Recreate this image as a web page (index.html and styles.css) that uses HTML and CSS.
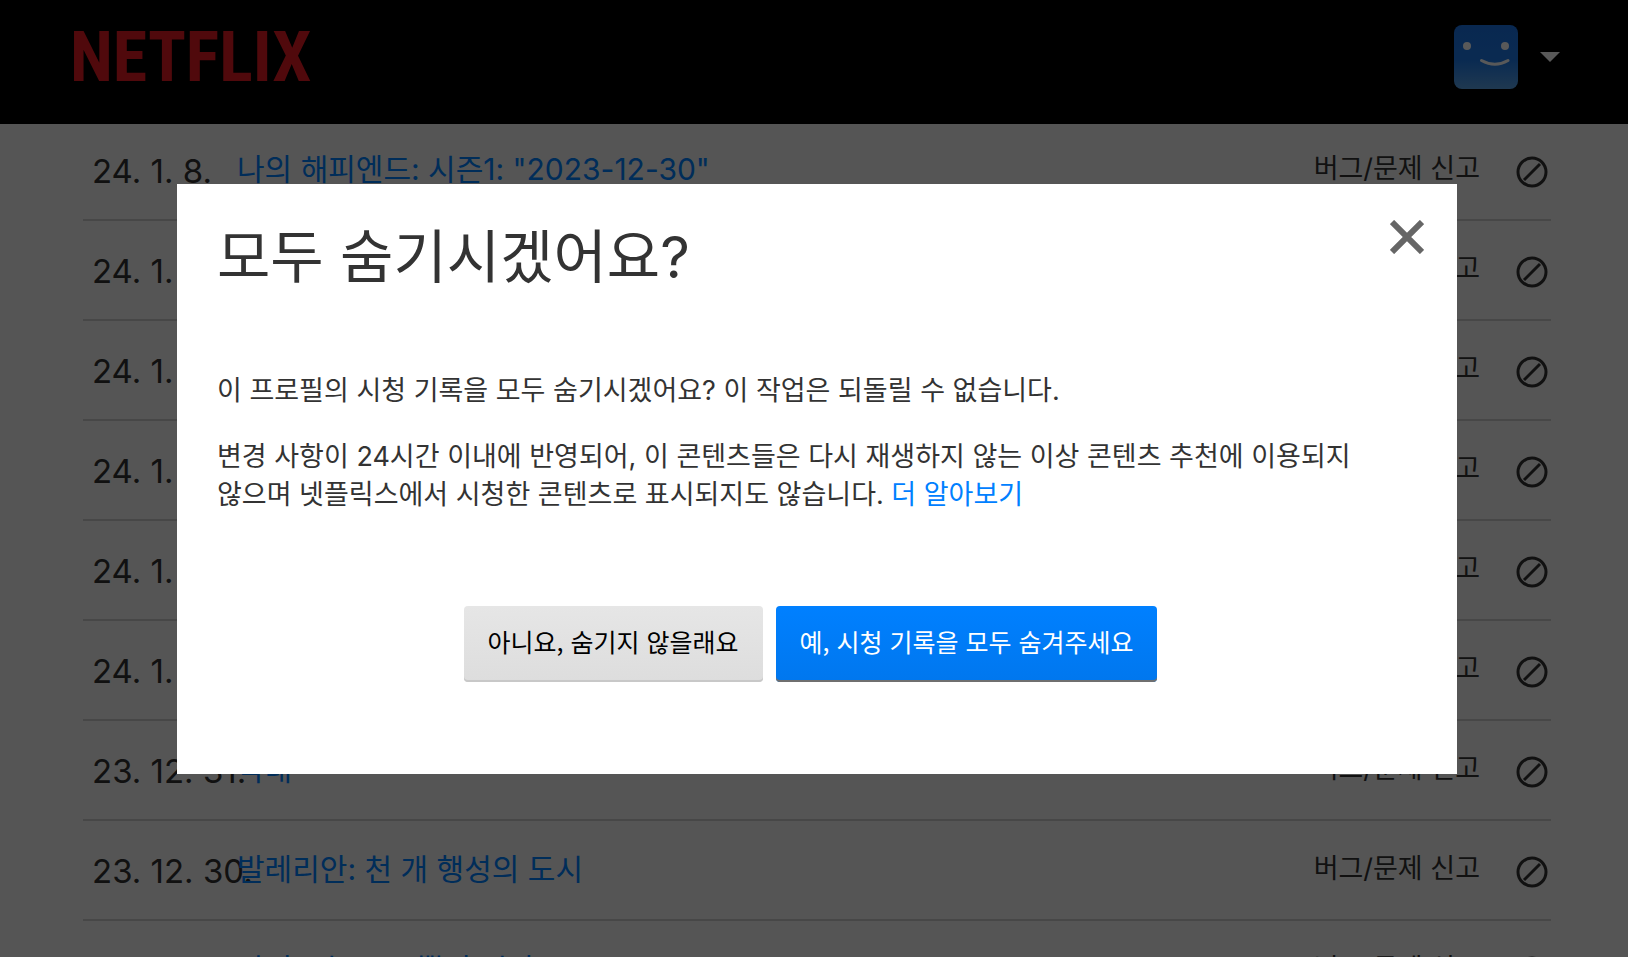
FILE: index.html
```html
<!DOCTYPE html>
<html lang="ko">
<head>
    <meta charset="UTF-8">
    <meta name="viewport" content="width=device-width, initial-scale=1.0">
    <title>시청 기록 - 넷플릭스</title>
    <link rel="stylesheet" href="styles.css">
</head>
<body>
    <header class="header">
        <a href="#" class="logo">NETFLIX</a>
        <button type="button" class="profile" aria-label="프로필">
            <svg class="avatar" viewBox="0 0 64 64">
                <defs>
                    <linearGradient id="avatarFill" x1="0" y1="0" x2="0" y2="1">
                        <stop offset="0" stop-color="#1b73e6"/>
                        <stop offset="0.55" stop-color="#1e7ae8"/>
                        <stop offset="1" stop-color="#5aa2e6"/>
                    </linearGradient>
                </defs>
                <rect width="64" height="64" rx="8" fill="url(#avatarFill)"/>
                <circle cx="13" cy="21" r="4" fill="#fff"/>
                <circle cx="51" cy="21" r="4" fill="#fff"/>
                <path d="M27.500 35.500 Q41 43 54 35.500" fill="none" stroke="#fff" stroke-width="3" stroke-linecap="round"/>
            </svg>
            <span class="arrow"></span>
        </button>
    </header>

    <main class="container">
        <ul class="history" id="history"></ul>
    </main>

    <div class="overlay">
        <div class="modal" role="dialog" aria-modal="true" aria-labelledby="modalTitle">
            <button type="button" class="close" aria-label="닫기">
                <svg viewBox="0 0 34 34">
                    <path d="M2 2 L32 32 M32 2 L2 32" stroke="#666" stroke-width="6"/>
                </svg>
            </button>
            <h1 id="modalTitle">모두 숨기시겠어요?</h1>
            <p>이 프로필의 시청 기록을 모두 숨기시겠어요? 이 작업은 되돌릴 수 없습니다.</p>
            <p>변경 사항이 24시간 이내에 반영되어, 이 콘텐츠들은 다시 재생하지 않는 이상 콘텐츠 추천에 이용되지 않으며 넷플릭스에서 시청한 콘텐츠로 표시되지도 않습니다. <a href="#">더 알아보기</a></p>
            <div class="buttons">
                <button type="button" class="btn btn-gray">아니요, 숨기지 않을래요</button>
                <button type="button" class="btn btn-blue">예, 시청 기록을 모두 숨겨주세요</button>
            </div>
        </div>
    </div>

    <script src="script.js"></script>
</body>
</html>
```

FILE: styles.css
```css
* {
    box-sizing: border-box;
}
body {
    margin: 0;
    height: 100vh;
    overflow: hidden;
    background-color: #f3f3f3;
    color: #333;
    font-family: Inter, 'Noto Sans CJK KR', sans-serif;
}
a {
    color: #0080ff;
    text-decoration: none;
}
button {
    border: none;
    padding: 0;
    background: none;
    font-family: inherit;
    cursor: pointer;
}
.header {
    display: flex;
    justify-content: space-between;
    align-items: center;
    height: 124px;
    padding: 0 68px 10px 70px;
    background-color: #000;
}
.logo {
    color: #e51c23;
    font-family: 'Roboto Condensed', 'Liberation Sans Narrow', Roboto, sans-serif;
    font-size: 70px;
    font-weight: bold;
    line-height: 64px;
}
.profile {
    display: flex;
    align-items: center;
    gap: 22px;
}
.avatar {
    width: 64px;
    height: 64px;
}
.arrow {
    border: 10px solid transparent;
    border-top-color: #fff;
    border-bottom: none;
}
.container {
    padding: 0 77px 0 83px;
}
.history {
    margin: 0;
    padding: 0;
    list-style: none;
}
.history li {
    display: flex;
    align-items: flex-end;
    height: 100px;
    padding: 0 3px 31px 9px;
    border-bottom: 2px solid #ccc;
    line-height: 32px;
}
.history li:first-child {
    height: 97px;
}
.date {
    width: 145px;
    padding-bottom: 1px;
    font-size: 33px;
    white-space: nowrap;
}
.title {
    flex: 1;
    padding-bottom: 3px;
    font-size: 30px;
}
.report {
    margin-right: 36px;
    padding-bottom: 3px;
    color: #333;
    font-size: 27px;
}
.hide {
    width: 32px;
    height: 32px;
}
svg {
    display: block;
}
.overlay {
    position: fixed;
    inset: 0;
    display: flex;
    justify-content: center;
    align-items: flex-start;
    padding: 184px 171px 0 177px;
    background-color: rgba(0, 0, 0, 0.65);
}
.modal {
    position: relative;
    width: 100%;
    padding: 33px 40px 92px;
    background-color: #fff;
}
.modal h1 {
    margin: 0 0 75px;
    font-size: 58px;
    font-weight: normal;
    line-height: 80px;
}
.modal p {
    margin: 0 0 28px;
    font-size: 27px;
    line-height: 38px;
    word-break: keep-all;
}
.close {
    position: absolute;
    top: 36px;
    right: 33px;
    width: 34px;
    height: 34px;
}
.buttons {
    display: flex;
    justify-content: center;
    margin-top: 92px;
}
.btn {
    height: 76px;
    margin-right: 13px;
    padding: 0 24px 6px;
    border-radius: 4px;
    font-family: 'Noto Sans CJK KR', sans-serif;
    font-size: 25px;
}
.btn-gray {
    background-image: linear-gradient(#e6e6e6, #ddd);
    box-shadow: inset 0 -2px 0 #c8c8c8;
    color: #000;
}
.btn-blue {
    background-image: linear-gradient(#0080ff, #0077ee);
    box-shadow: inset 0 -2px 0 #6f6f6f;
    color: #fff;
}
```

FILE: script.js
```javascript
const records = [
    { date: "24. 1. 8.", title: '나의 해피엔드: 시즌1: "2023-12-30"' },
    { date: "24. 1.", title: "" },
    { date: "24. 1.", title: "" },
    { date: "24. 1.", title: "" },
    { date: "24. 1.", title: "" },
    { date: "24. 1.", title: "" },
    { date: "23. 12. 31.", title: "막내" },
    { date: "23. 12. 30.", title: "발레리안: 천 개 행성의 도시" },
    { date: "", title: '악귀: 시즌 1: "뿔의 시작"' }
];

document.getElementById("history").innerHTML = records.map(r => `
    <li>
        <span class="date">${r.date}</span>
        <a href="#" class="title">${r.title}</a>
        <a href="#" class="report">버그/문제 신고</a>
        <button type="button" class="hide" aria-label="숨기기">
            <svg viewBox="0 0 32 32" fill="none" stroke="#333" stroke-width="3">
                <circle cx="16" cy="16" r="14"/>
                <path d="M8 24 L24 8"/>
            </svg>
        </button>
    </li>
`).join("");
```
